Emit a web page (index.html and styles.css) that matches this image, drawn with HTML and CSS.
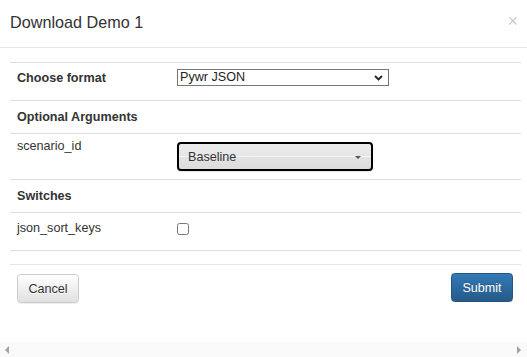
FILE: index.html
```html
<!DOCTYPE html>
<html>
<head>
<meta charset="utf-8">
<link rel="stylesheet" href="styles.css">
</head>
<body>
<div class="page">
  <div class="modal-header">
    <h4 class="modal-title">Download Demo 1</h4>
    <span class="close">×</span>
  </div>
  <div class="modal-body">
    <div class="form-table">
      <div class="row row-format">
        <div class="cell label bold">Choose format</div>
        <div class="cell">
          <div class="select-wrap">
            <select class="native-select"><option>Pywr JSON</option></select>
            <svg class="chev" width="9" height="6" viewBox="0 0 9 6"><path d="M1 1 L4.5 4.5 L8 1" fill="none" stroke="#222" stroke-width="1.8"/></svg>
          </div>
        </div>
      </div>
      <div class="row row-section">
        <div class="cell label bold">Optional Arguments</div>
        <div class="cell"></div>
      </div>
      <div class="row row-scenario">
        <div class="cell label label-top">scenario_id</div>
        <div class="cell">
          <button class="picker"><span>Baseline</span><span class="caret"></span></button>
        </div>
      </div>
      <div class="row row-section">
        <div class="cell label bold">Switches</div>
        <div class="cell"></div>
      </div>
      <div class="row row-switch">
        <div class="cell label">json_sort_keys</div>
        <div class="cell"><input type="checkbox" class="check"></div>
      </div>
    </div>
  </div>
  <div class="modal-footer">
    <button class="btn btn-default">Cancel</button>
    <button class="btn btn-primary">Submit</button>
  </div>
  <div class="spacer"></div>
  <div class="hscroll">
    <span class="arrow arrow-left"></span>
    <span class="arrow arrow-right"></span>
  </div>
</div>
</body>
</html>
```
FILE: styles.css
```css
* { box-sizing: border-box; }
html, body { margin: 0; padding: 0; background: #fff; }
body {
  font-family: "Liberation Sans", Arial, sans-serif;
  font-size: 12.6px;
  line-height: 18px;
  color: #333;
  overflow: hidden;
}
.page {
  width: 527px;
  height: 357px;
  display: flex;
  flex-direction: column;
}
.modal-header {
  height: 48px;
  border-bottom: 1px solid #e5e5e5;
  padding: 13px 8px 0 10px;
  display: flex;
  justify-content: space-between;
  align-items: flex-start;
}
.modal-title {
  margin: 0;
  font-size: 16.2px;
  font-weight: normal;
  line-height: 18px;
  color: #333;
}
.close {
  font-size: 18px;
  font-weight: normal;
  line-height: 10px;
  color: #000;
  opacity: 0.2;
  margin-top: 3px;
  margin-right: 1px;
}
.modal-body {
  padding: 14px 6px 0 10px;
}
.form-table {
  border-bottom: 1px solid #ddd;
}
.row {
  display: grid;
  grid-template-columns: 160px 1fr;
  border-top: 1px solid #ddd;
}
.cell {
  padding: 6px 7px;
}
.bold { font-weight: bold; }
.row-format { height: 38px; }
.row-section { height: 33px; }
.row-section .cell { padding-top: 7px; }
.row-scenario { height: 46px; }
.row-scenario .label-top { padding-top: 3px; }
.row-scenario .cell:last-child { padding-top: 8px; }
.row-switch { height: 38px; }
.row-format .cell:last-child { padding-top: 6px; }

.select-wrap {
  position: relative;
  width: 212px;
  height: 17px;
}
.native-select {
  appearance: none;
  -webkit-appearance: none;
  width: 212px;
  height: 17px;
  border: 1px solid #767676;
  border-radius: 0;
  background: #fff;
  font-family: "Liberation Sans", Arial, sans-serif;
  font-size: 12.6px;
  line-height: 15px;
  color: #222;
  padding: 0 0 0 2px;
  margin: 0;
  display: block;
}
.chev {
  position: absolute;
  right: 6px;
  top: 6px;
}
.picker {
  width: 196px;
  height: 29px;
  border: 2px solid #000;
  border-radius: 4px;
  background: linear-gradient(to bottom, #ececec 0, #e6e6e6 48%, #f4f4f4 50%, #e3e3e3 53%, #dcdcdc 100%);
  font-family: "Liberation Sans", Arial, sans-serif;
  font-size: 12.6px;
  color: #333;
  padding: 0 9px 0 9px;
  margin: 0;
  display: flex;
  align-items: center;
  justify-content: space-between;
  text-align: left;
  box-shadow: 0 1px 1px rgba(0,0,0,0.1);
}
.caret {
  width: 0;
  height: 0;
  border-top: 3px solid #555;
  border-left: 3px solid transparent;
  border-right: 3px solid transparent;
  margin-right: 1px;
  margin-top: 2px;
}
.check {
  width: 12px;
  height: 12px;
  margin: 4px 0 0 0;
  display: block;
}
.modal-footer {
  margin: 13px 6px 0 10px;
  border-top: 1px solid #e5e5e5;
  padding: 9px 8px 0 7px;
  display: flex;
  justify-content: space-between;
}
.btn {
  width: 62px;
  height: 29px;
  border-radius: 3.6px;
  font-family: "Liberation Sans", Arial, sans-serif;
  font-size: 12.6px;
  padding: 0;
  margin: 0;
  cursor: pointer;
}
.btn-default {
  background: linear-gradient(to bottom, #fff 0, #e0e0e0 100%);
  border: 1px solid #ccc;
  color: #333;
  text-shadow: 0 1px 0 #fff;
  box-shadow: inset 0 1px 0 rgba(255,255,255,0.15), 0 1px 1px rgba(0,0,0,0.075);
}
.btn-primary {
  background: linear-gradient(to bottom, #337ab7 0, #265a88 100%);
  border: 1px solid #245580;
  color: #fff;
  text-shadow: 0 -1px 0 rgba(0,0,0,0.2);
  margin-top: -1px;
}
.spacer { flex: 1; }
.hscroll {
  height: 15px;
  background: #f9f9f9;
  display: flex;
  justify-content: space-between;
  align-items: center;
  padding: 0 6px 0 5px;
}
.arrow {
  width: 0;
  height: 0;
  border-top: 4px solid transparent;
  border-bottom: 4px solid transparent;
}
.arrow-left { border-right: 4px solid #a3a3a3; }
.arrow-right { border-left: 4px solid #a3a3a3; }
```
